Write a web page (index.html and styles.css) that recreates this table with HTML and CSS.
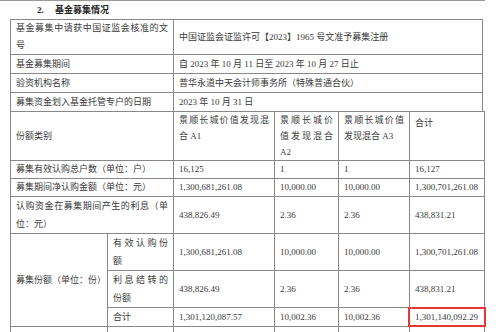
FILE: index.html
```html
<!DOCTYPE html>
<html lang="zh-CN">
<head>
    <meta charset="UTF-8">
    <meta name="viewport" content="width=device-width, initial-scale=1.0">
    <title>基金募集情况</title>
    <link rel="stylesheet" href="styles.css">
</head>
<body>
    <div class="page">
        <div class="rule"></div>
        <h2 class="sec-title"><span class="num">2.</span>基金募集情况</h2>

        <table class="grid grid-top">
            <colgroup>
                <col class="w-label">
                <col class="w-value">
            </colgroup>
            <tr class="first">
                <td><span class="jl">基金募集中请获中国证监会核准的文</span>号</td>
                <td>中国证监会证监许可【2023】1965 号文准予募集注册</td>
            </tr>
            <tr>
                <td>基金募集期间</td>
                <td>自 2023 年 10 月 11 日至 2023 年 10 月 27 日止</td>
            </tr>
            <tr>
                <td>验资机构名称</td>
                <td>普华永道中天会计师事务所（特殊普通合伙）</td>
            </tr>
            <tr>
                <td>募集资金划入基金托管专户的日期</td>
                <td>2023 年 10 月 31 日</td>
            </tr>
        </table>

        <table class="grid grid-main">
            <colgroup>
                <col class="w-a">
                <col class="w-b">
                <col class="w-c2">
                <col class="w-c3">
                <col class="w-c4">
                <col class="w-c5">
            </colgroup>
            <tr class="head">
                <td colspan="2" class="mid">份额类别</td>
                <td><span class="jl">景顺长城价值发现混</span>合 A1</td>
                <td><span class="jl">景顺长城价</span><span class="jl">值发现混合</span>A2</td>
                <td><span class="jl">景顺长城价值</span>发现混合 A3</td>
                <td class="total-head">合计</td>
            </tr>
            <tr class="short">
                <td colspan="2">募集有效认购总户数（单位：户）</td>
                <td>16,125</td>
                <td>1</td>
                <td>1</td>
                <td>16,127</td>
            </tr>
            <tr class="short">
                <td colspan="2">募集期间净认购金额（单位：元）</td>
                <td>1,300,681,261.08</td>
                <td>10,000.00</td>
                <td>10,000.00</td>
                <td>1,300,701,261.08</td>
            </tr>
            <tr>
                <td colspan="2"><span class="jl">认购资金在募集期间产生的利息（单</span>位：元）</td>
                <td>438,826.49</td>
                <td>2.36</td>
                <td>2.36</td>
                <td>438,831.21</td>
            </tr>
            <tr>
                <td rowspan="3">募集份额（单位：份）</td>
                <td><span class="jl">有效认购份</span>额</td>
                <td>1,300,681,261.08</td>
                <td>10,000.00</td>
                <td>10,000.00</td>
                <td>1,300,701,261.08</td>
            </tr>
            <tr>
                <td><span class="jl">利息结转的</span>份额</td>
                <td>438,826.49</td>
                <td>2.36</td>
                <td>2.36</td>
                <td>438,831.21</td>
            </tr>
            <tr>
                <td>合计</td>
                <td>1,301,120,087.57</td>
                <td>10,002.36</td>
                <td>10,002.36</td>
                <td class="marked">1,301,140,092.29<span class="mark"></span></td>
            </tr>
            <tr class="tail">
                <td></td>
                <td></td>
                <td></td>
                <td></td>
                <td></td>
                <td></td>
            </tr>
        </table>
    </div>
</body>
</html>
```

FILE: styles.css
```css
body {
    margin: 0;
    background-color: #ffffff;
    color: #3a3a3a;
    font-family: "Liberation Serif", "Noto Sans CJK SC", serif;
    font-size: 9px;
    line-height: 18px;
}

.page {
    width: 500px;
}

.rule {
    width: 485px;
    border-top: 1px solid #999999;
}

.sec-title {
    margin: 0;
    padding-left: 37px;
    font-size: 9px;
    font-weight: bold;
    line-height: 18px;
    color: #222222;
}

.sec-title .num {
    display: inline-block;
    width: 18px;
}

.grid {
    border-collapse: collapse;
    table-layout: fixed;
    margin-left: 10px;
}

.grid td {
    border: 1px solid #888888;
    padding: 0 5px;
    vertical-align: middle;
    line-height: 18px;
    white-space: nowrap;
}

/* line that is spread across the whole cell, like justified Word text */
.jl {
    display: block;
    text-align: justify;
    text-align-last: justify;
}

.grid-top {
    width: 472px;
}

.grid-top .first td {
    line-height: 17px;
}

.w-label { width: 163px; }
.w-value { width: 309px; }

.grid-main {
    width: 474px;
    margin-top: -1px;
}

.w-a  { width: 97px; }
.w-b  { width: 66px; }
.w-c2 { width: 101px; }
.w-c3 { width: 64px; }
.w-c4 { width: 71px; }
.w-c5 { width: 75px; }

.grid-main .head td {
    vertical-align: top;
    padding-top: 0;
    line-height: 16px;
}

.grid-main .head td.mid {
    vertical-align: middle;
}

.grid-main .head td.total-head {
    padding-top: 3px;
}

.grid-main .short td {
    line-height: 17px;
}

.grid-main .tail td {
    height: 20px;
}

.marked {
    position: relative;
}

.mark {
    position: absolute;
    top: -1px;
    left: -2px;
    right: -2px;
    bottom: -1px;
    border: 2px solid #e53935;
}
```
